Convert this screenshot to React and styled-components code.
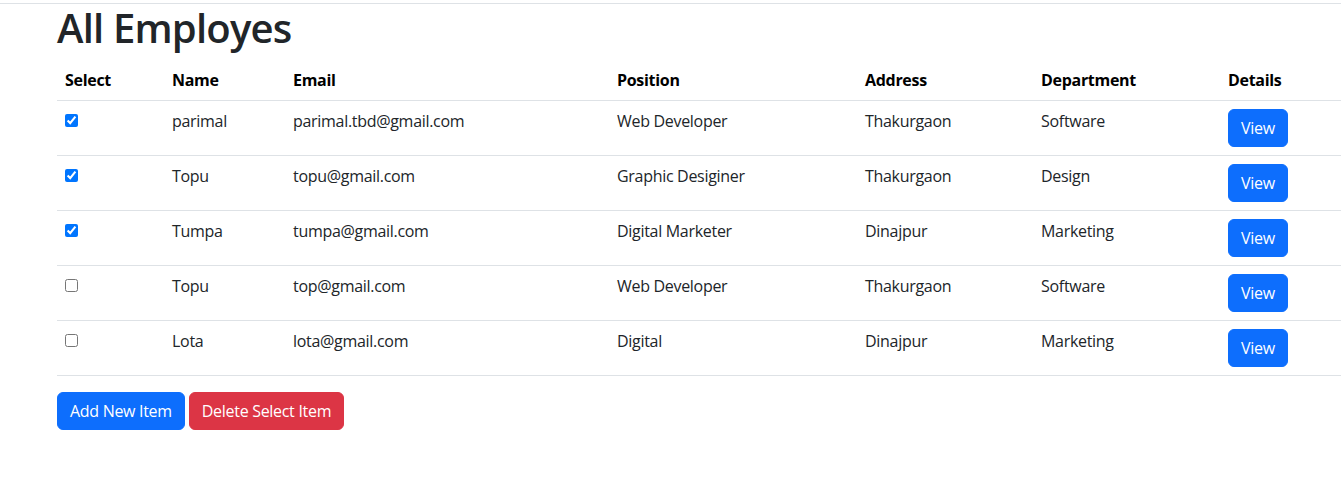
import React, { useState } from "react";
import styled, { createGlobalStyle } from "styled-components";

const GlobalStyle = createGlobalStyle`
    body {
        margin: 0;
        font-family: "Open Sans", "Noto Sans", sans-serif;
        font-size: 16px;
        line-height: 1.5;
        letter-spacing: -0.3px;
        color: #212529;
        background: #fff;
    }
    * { box-sizing: border-box; }
`;

const Page = styled.div`
    padding-top: 3px;
`;

const TopRule = styled.div`
    border-top: 1px solid #dee2e6;
`;

const Content = styled.div`
    padding-left: 57px;
`;

const Title = styled.h1`
    margin: 0 0 8px;
    font-size: 40px;
    font-weight: 600;
    line-height: 1.2;
    letter-spacing: -0.8px;
`;

const Table = styled.table`
    width: 100%;
    border-collapse: collapse;
    margin-bottom: 16px;
    vertical-align: top;
    table-layout: fixed;
`;

const Th = styled.th`
    text-align: left;
    font-weight: 700;
    color: #000;
    padding: 8px;
    border-bottom: 1px solid #dee2e6;
    width: ${(p) => p.$w}px;
`;

const Td = styled.td`
    padding: 8px;
    vertical-align: top;
    border-bottom: 1px solid #dee2e6;
    white-space: nowrap;
`;

const Check = styled.input`
    display: block;
    margin: 5px 0 0 0;
    width: 13px;
    height: 13px;
`;

const Button = styled.button`
    display: inline-block;
    font-family: inherit;
    font-size: 16px;
    line-height: 24px;
    letter-spacing: -0.3px;
    padding: 6px 12px;
    border: 1px solid ${(p) => (p.$variant === "danger" ? "#dc3545" : "#0d6efd")};
    background: ${(p) => (p.$variant === "danger" ? "#dc3545" : "#0d6efd")};
    color: #fff;
    border-radius: 6px;
    cursor: pointer;
`;

const Actions = styled.div`
    display: flex;
    gap: 4px;
`;

const columns = [
    { label: "Select", w: 107 },
    { label: "Name", w: 121 },
    { label: "Email", w: 324 },
    { label: "Position", w: 248 },
    { label: "Address", w: 176 },
    { label: "Department", w: 187 },
    { label: "Details", w: 121 },
];

const initialEmployees = [
    { id: 1, name: "parimal", email: "parimal.tbd@gmail.com", position: "Web Developer", address: "Thakurgaon", department: "Software", checked: true },
    { id: 2, name: "Topu", email: "topu@gmail.com", position: "Graphic Desiginer", address: "Thakurgaon", department: "Design", checked: true },
    { id: 3, name: "Tumpa", email: "tumpa@gmail.com", position: "Digital Marketer", address: "Dinajpur", department: "Marketing", checked: true },
    { id: 4, name: "Topu", email: "top@gmail.com", position: "Web Developer", address: "Thakurgaon", department: "Software", checked: false },
    { id: 5, name: "Lota", email: "lota@gmail.com", position: "Digital", address: "Dinajpur", department: "Marketing", checked: false },
];

const App = () => {
    const [employees, setEmployees] = useState(initialEmployees);

    const toggle = (id) => {
        setEmployees(employees.map((e) => (e.id === id ? { ...e, checked: !e.checked } : e)));
    };

    return (
        <Page>
            <GlobalStyle />
            <TopRule />
            <Content>
                <Title>All Employes</Title>
                <Table>
                    <thead>
                        <tr>
                            {columns.map((c) => (
                                <Th key={c.label} $w={c.w}>{c.label}</Th>
                            ))}
                        </tr>
                    </thead>
                    <tbody>
                        {employees.map((emp) => (
                            <tr key={emp.id}>
                                <Td>
                                    <Check type="checkbox" checked={emp.checked} onChange={() => toggle(emp.id)} />
                                </Td>
                                <Td>{emp.name}</Td>
                                <Td>{emp.email}</Td>
                                <Td>{emp.position}</Td>
                                <Td>{emp.address}</Td>
                                <Td>{emp.department}</Td>
                                <Td><Button>View</Button></Td>
                            </tr>
                        ))}
                    </tbody>
                </Table>
                <Actions>
                    <Button>Add New Item</Button>
                    <Button $variant="danger">Delete Select Item</Button>
                </Actions>
            </Content>
        </Page>
    );
};

export default App;
